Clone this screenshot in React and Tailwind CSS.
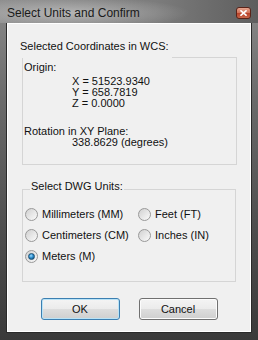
import React from "react";

function Radio({ checked, label }) {
  return (
    <div className="flex h-[21px] items-center gap-[4px] whitespace-nowrap">
      <span className="flex h-[13px] w-[13px] shrink-0 items-center justify-center rounded-full border border-[#999] bg-[linear-gradient(135deg,#d0d0d0_0%,#e8e8e8_55%,#fafafa_100%)]">
        {checked && (
          <span className="h-[7px] w-[7px] rounded-full border border-[#1b4f72] bg-[radial-gradient(circle_at_40%_35%,#9fdcff_0%,#2c8fd0_45%,#0b3f66_100%)]" />
        )}
      </span>
      <span className="leading-[11px]">{label}</span>
    </div>
  );
}

export default function App() {
  return (
    <div className="flex h-[340px] w-[258px] flex-col bg-[linear-gradient(180deg,#8a8a8a_0%,#6a6a6a_30%,#4c4c4c_70%,#3a3a3a_100%)] font-['Liberation_Sans',Arial,sans-serif] text-[11px] text-[#111]">
      <div className="relative flex h-[23px] shrink-0 items-center justify-between bg-[radial-gradient(ellipse_120px_16px_at_70px_13px,rgba(220,220,220,0.55),rgba(220,220,220,0)_100%),linear-gradient(90deg,#8e8e8e_0%,#7c7c7c_60%,#5e5e5e_100%)] pl-[7px] pr-[7px] pt-[3px]">
        <span className="text-[12px] leading-[15px] text-[#1a1a1a]">Select Units and Confirm</span>
        <span className="flex h-[12px] w-[15px] items-center justify-center rounded-[3px] border border-[#5a2318] bg-[linear-gradient(180deg,#e6a58f_0%,#d3755c_45%,#b9432a_55%,#c8674a_100%)]">
          <svg width="7" height="6" viewBox="0 0 7 6">
            <path d="M1 0.8 L6 5.2 M6 0.8 L1 5.2" stroke="#fff" strokeWidth="1.6" strokeLinecap="square" />
          </svg>
        </span>
      </div>
      <div className="ml-[7px] h-[309px] w-[244px] shrink-0 border border-white bg-[#f0f0f0] shadow-[0_0_0_1px_#2a2a2a]">
        {/* Group 1 */}
        <div className="ml-[14px] mt-[15px] w-[215px]">
          <div className="flex h-[19px]">
            <span className="-ml-[2px] whitespace-nowrap pr-[3px] leading-[15px]">Selected Coordinates in WCS:</span>
            <div className="h-px flex-1 self-end bg-[#d5d5d5]" />
          </div>
          <div className="h-[107px] border-x border-b border-[#d5d5d5] pl-[1px] pt-[2px]">
            <div className="leading-[15px]">Origin:</div>
            <div className="ml-[48px] mt-[1px] leading-[11px]">
              <div>X = 51523.9340</div>
              <div>Y = 658.7819</div>
              <div>Z = 0.0000</div>
            </div>
            <div className="mt-[17px] leading-[11px]">Rotation in XY Plane:</div>
            <div className="ml-[48px] leading-[11px]">338.8629 (degrees)</div>
          </div>
        </div>
        {/* Group 2 */}
        <div className="ml-[14px] mt-[14px] w-[214px]">
          <div className="flex h-[11px] items-start">
            <div className="mt-[10px] h-px w-[8px] bg-[#d5d5d5]" />
            <span className="px-[1px] leading-[15px]">Select DWG Units:</span>
            <div className="mt-[10px] h-px flex-1 bg-[#d5d5d5]" />
          </div>
          <div className="grid h-[92px] grid-cols-[113px_1fr] content-start border-x border-b border-[#d5d5d5] pl-[2px] pt-[14px]">
            <Radio label="Millimeters (MM)" />
            <Radio label="Feet (FT)" />
            <Radio label="Centimeters (CM)" />
            <Radio label="Inches (IN)" />
            <Radio label="Meters (M)" checked />
          </div>
        </div>
        {/* Buttons */}
        <div className="mt-[16px] flex justify-center gap-[19px]">
          <button className="h-[22px] w-[79px] rounded-[3px] border border-[#3c7fb1] bg-[linear-gradient(180deg,#f4f4f4_0%,#ebebeb_50%,#dddddd_51%,#cfcfcf_100%)] shadow-[inset_0_0_0_1px_#b9e3f7] leading-[13px] text-[#111]">
            OK
          </button>
          <button className="h-[22px] w-[79px] rounded-[3px] border border-[#707070] bg-[linear-gradient(180deg,#f4f4f4_0%,#ebebeb_50%,#dddddd_51%,#cfcfcf_100%)] shadow-[inset_0_0_0_1px_#fcfcfc] leading-[13px] text-[#111]">
            Cancel
          </button>
        </div>
      </div>
    </div>
  );
}
